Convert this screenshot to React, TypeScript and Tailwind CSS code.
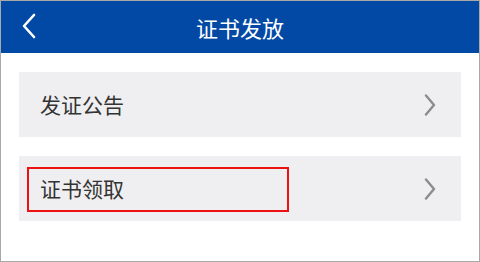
const font = { fontFamily: '"Noto Sans CJK SC", "Noto Sans", sans-serif' };

function Chevron({ className }: { className?: string }) {
  return (
    <svg width="12" height="22" viewBox="0 0 12 22" className={className} fill="none">
      <polyline points="2,1.5 10,11 2,20.5" stroke="currentColor" strokeWidth="2.4" strokeLinecap="round" strokeLinejoin="round" />
    </svg>
  );
}

function Row({ label, marked }: { label: string; marked?: boolean }) {
  return (
    <div className="relative flex h-[65px] items-center justify-between bg-[#efeff1] pl-[21px] pr-[25px]">
      <span className="text-[21px] leading-none text-[#333333]">{label}</span>
      <Chevron className="text-[#8c8c8c]" />
      {marked && (
        <div className="absolute left-[8px] top-[11px] h-[45px] w-[262px] border-2 border-[#ee1111]" />
      )}
    </div>
  );
}

export default function App() {
  return (
    <div className="h-[262px] w-[480px] border border-[#a8a8a8] bg-white" style={font}>
      <div className="relative flex h-[52px] items-center justify-center bg-[#0249a6]">
        <svg width="16" height="26" viewBox="0 0 16 26" className="absolute left-[20px] top-[12px] text-white" fill="none">
          <polyline points="13,2 3,13 13,24" stroke="currentColor" strokeWidth="2.6" strokeLinecap="round" strokeLinejoin="round" />
        </svg>
        <span className="text-[22px] leading-none text-white">证书发放</span>
      </div>
      <div className="flex flex-col gap-[19px] px-[18px] pt-[19px]">
        <Row label="发证公告" />
        <Row label="证书领取" marked />
      </div>
    </div>
  );
}
